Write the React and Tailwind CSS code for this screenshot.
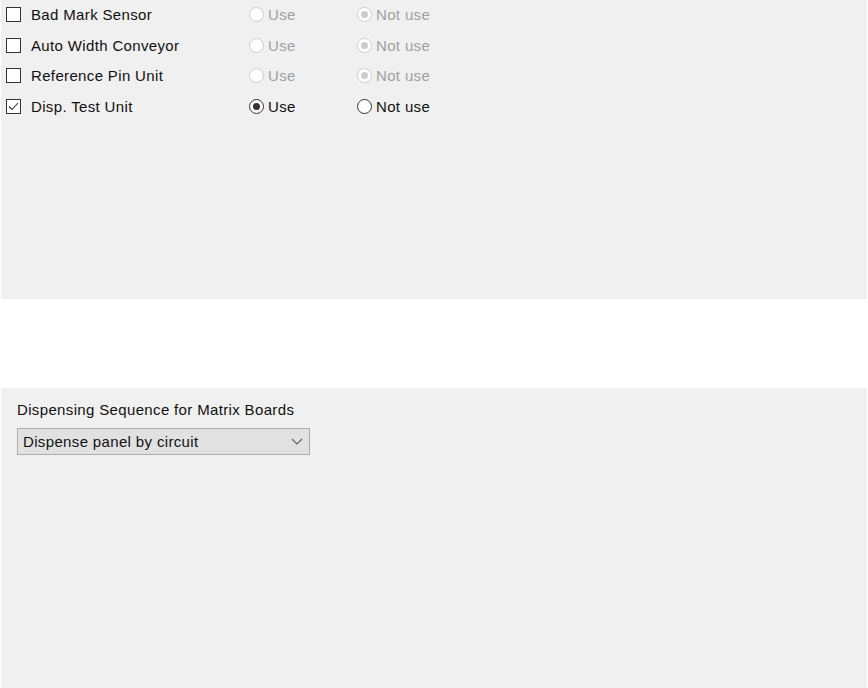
import React from 'react';

const font = { fontFamily: '"Liberation Sans", Arial, sans-serif' };

const Checkbox = ({ checked }) => (
  <span className="w-[15px] h-[15px] border border-[#333333] bg-white flex items-center justify-center shrink-0">
    {checked && (
      <svg width="13" height="13" viewBox="0 0 13 13">
        <path d="M2 6.5 L5 9.5 L11 3" fill="none" stroke="#333333" strokeWidth="1.1" />
      </svg>
    )}
  </span>
);

const Radio = ({ checked, disabled }) => (
  <span
    className={
      'w-[15px] h-[15px] rounded-full border bg-white flex items-center justify-center shrink-0 ' +
      (disabled ? 'border-[#cccccc]' : 'border-[#333333]')
    }
  >
    {checked && (
      <span className={'w-[7px] h-[7px] rounded-full ' + (disabled ? 'bg-[#cccccc]' : 'bg-[#333333]')} />
    )}
  </span>
);

const rows = [
  { label: 'Bad Mark Sensor', checked: false, use: false },
  { label: 'Auto Width Conveyor', checked: false, use: false },
  { label: 'Reference Pin Unit', checked: false, use: false },
  { label: 'Disp. Test Unit', checked: true, use: true },
];

export default function App() {
  return (
    <div className="w-[868px] h-[688px] bg-white px-[1px] flex flex-col overflow-hidden text-[15px] tracking-[0.35px] text-[#111111]" style={font}>
      {/* Unit options */}
      <div className="h-[299px] bg-[#f0f0f0] flex flex-col">
        <div className="-mt-[1px] flex flex-col">
          {rows.map((r) => {
            const disabled = !r.checked;
            const dim = disabled ? 'text-[#a0a0a0]' : 'text-[#111111]';
            return (
              <div key={r.label} className="h-[30.7px] flex items-center">
                <div className="w-[248px] flex items-center pl-[5px]">
                  <Checkbox checked={r.checked} />
                  <span className="ml-[10px] leading-none">{r.label}</span>
                </div>
                <div className="w-[108px] flex items-center">
                  <Radio checked={r.use} disabled={disabled} />
                  <span className={'ml-[4px] leading-none ' + dim}>Use</span>
                </div>
                <div className="flex items-center">
                  <Radio checked={!r.use} disabled={disabled} />
                  <span className={'ml-[4px] leading-none ' + dim}>Not use</span>
                </div>
              </div>
            );
          })}
        </div>
      </div>

      <div className="h-[89px]" />

      {/* Matrix dispensing */}
      <div className="h-[300px] bg-[#f0f0f0] pl-[16px] pt-[13px] flex flex-col">
        <div className="h-[17px] leading-[17px]">Dispensing Sequence for Matrix Boards</div>
        <div className="mt-[10px] w-[293px] h-[27px] border border-[#adadad] bg-[#e1e1e1] flex items-center justify-between pl-[5px] pr-[6px]">
          <span className="leading-none">Dispense panel by circuit</span>
          <svg width="12" height="7" viewBox="0 0 12 7">
            <path d="M1 1 L6 6 L11 1" fill="none" stroke="#606060" strokeWidth="1.1" />
          </svg>
        </div>
      </div>
    </div>
  );
}
